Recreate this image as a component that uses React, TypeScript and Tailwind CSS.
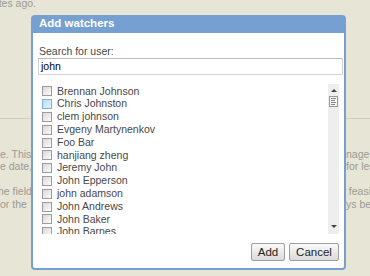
import React from 'react';

const users = [
  'Brennan Johnson',
  'Chris Johnston',
  'clem johnson',
  'Evgeny Martynenkov',
  'Foo Bar',
  'hanjiang zheng',
  'Jeremy John',
  'John Epperson',
  'john adamson',
  'John Andrews',
  'John Baker',
  'John Barnes',
  'John Smith',
  'Johnny Walker',
];

const bgLines = [
  { left: 'e. This is', right: 'nage', leftShift: false, rightShift: false },
  { left: 'e date, the', right: 'for less', leftShift: false, rightShift: false },
];

const bgLines2 = [
  { left: 'he field is', right: 't feasible', leftShift: true, rightShift: true },
  { left: 'or the', right: 'ys be', leftShift: false, rightShift: false },
];

function Checkbox({ hover }: { hover?: boolean }) {
  return (
    <span
      className={
        hover
          ? 'block w-[10px] h-[10px] shrink-0 border border-[#7fb0dc] bg-gradient-to-br from-[#b9dcf5] to-[#e6f3fc]'
          : 'block w-[10px] h-[10px] shrink-0 border border-[#9c9c9c] bg-gradient-to-br from-[#d9d9d9] to-[#fbfbfb]'
      }
    />
  );
}

function BgRow({
  left,
  right,
  leftShift,
  rightShift,
}: {
  left: string;
  right: string;
  leftShift: boolean;
  rightShift: boolean;
}) {
  return (
    <div className="flex h-[12.8px] items-center">
      <div className="w-[31px] overflow-hidden">
        <span className={leftShift ? 'whitespace-nowrap block -ml-[2px]' : 'whitespace-nowrap block'}>
          {left}
        </span>
      </div>
      <div className="w-[315px]" />
      <div className="flex-1 overflow-hidden">
        <span className={rightShift ? 'whitespace-nowrap block -ml-[3px]' : 'whitespace-nowrap block'}>
          {right}
        </span>
      </div>
    </div>
  );
}

export default function App() {
  return (
    <div
      className="relative w-[370px] h-[276px] overflow-hidden bg-[#e6e5d6] text-[10.5px] text-[#9c9b93]"
      style={{ fontFamily: '"Liberation Sans", Arial, sans-serif' }}
    >
      {/* Page content behind the dialog */}
      <div className="flex -mt-[3px] h-[13px] items-center">
        <div className="w-[36px] overflow-hidden flex justify-end">
          <span className="whitespace-nowrap">Updated about 5 minutes ago.</span>
        </div>
      </div>
      <div className="mt-[108px] border-t border-[#cfcec2]" />
      <div className="mt-[29px]">
        {bgLines.map((l, i) => (
          <BgRow key={i} {...l} />
        ))}
      </div>
      <div className="mt-[12px]">
        {bgLines2.map((l, i) => (
          <BgRow key={i} {...l} />
        ))}
      </div>

      {/* Dialog */}
      <div className="absolute left-[31px] top-[15px] w-[315px] h-[255px] flex flex-col rounded-[4px] bg-[#76a0d1] px-[2px] pb-[2px]">
        <div className="h-[18px] flex items-center pl-[6px] text-white font-bold text-[11.5px]">
          Add watchers
        </div>
        <div className="flex-1 flex flex-col bg-white rounded-b-[2px] pt-[12px] pl-[5px] pr-[5px] text-[#484848]">
          <label className="h-[13px] leading-[13px] pl-[1px]">Search for user:</label>
          <div className="w-[305px] h-[17px] border border-[#d3d3d3] border-t-[#bcbcbc] flex items-center pl-[2px] text-black">
            john
          </div>
          <div className="mt-[9px] h-[150px] flex -ml-[1px]">
            <div className="flex-1 overflow-hidden pt-[1px]">
              {users.map((u, i) => (
                <div key={u} className="h-[12.8px] flex items-center gap-[5px] pl-[5px]">
                  <Checkbox hover={i === 1} />
                  <span className="whitespace-nowrap">{u}</span>
                </div>
              ))}
            </div>
            <div className="w-[11px] bg-[#eeeeee] flex flex-col items-center">
              <div className="mt-[5px] w-0 h-0 border-l-[3px] border-r-[3px] border-b-[3px] border-l-transparent border-r-transparent border-b-[#444]" />
              <div className="mt-[4px] w-[9px] h-[11px] border border-[#9a9a9a] bg-[#f4f4f4] flex flex-col justify-center gap-[1px] px-[1px]">
                <span className="block h-px bg-[#888] w-[5px]" />
                <span className="block h-px bg-[#888] w-[4px]" />
                <span className="block h-px bg-[#888] w-[5px]" />
                <span className="block h-px bg-[#888] w-[4px]" />
              </div>
              <div className="flex-1" />
              <div className="mb-[6px] w-0 h-0 border-l-[3px] border-r-[3px] border-t-[3px] border-l-transparent border-r-transparent border-t-[#444]" />
            </div>
          </div>
          <div className="mt-[9px] flex justify-end gap-[4px]">
            <button className="h-[18px] w-[34px] border border-[#9f9f9f] rounded-[2px] bg-gradient-to-b from-[#fafafa] to-[#dadada] text-[11.5px] text-[#222]">
              Add
            </button>
            <button className="h-[18px] w-[50px] border border-[#9f9f9f] rounded-[2px] bg-gradient-to-b from-[#fafafa] to-[#dadada] text-[11.5px] text-[#222]">
              Cancel
            </button>
          </div>
        </div>
      </div>
    </div>
  );
}
